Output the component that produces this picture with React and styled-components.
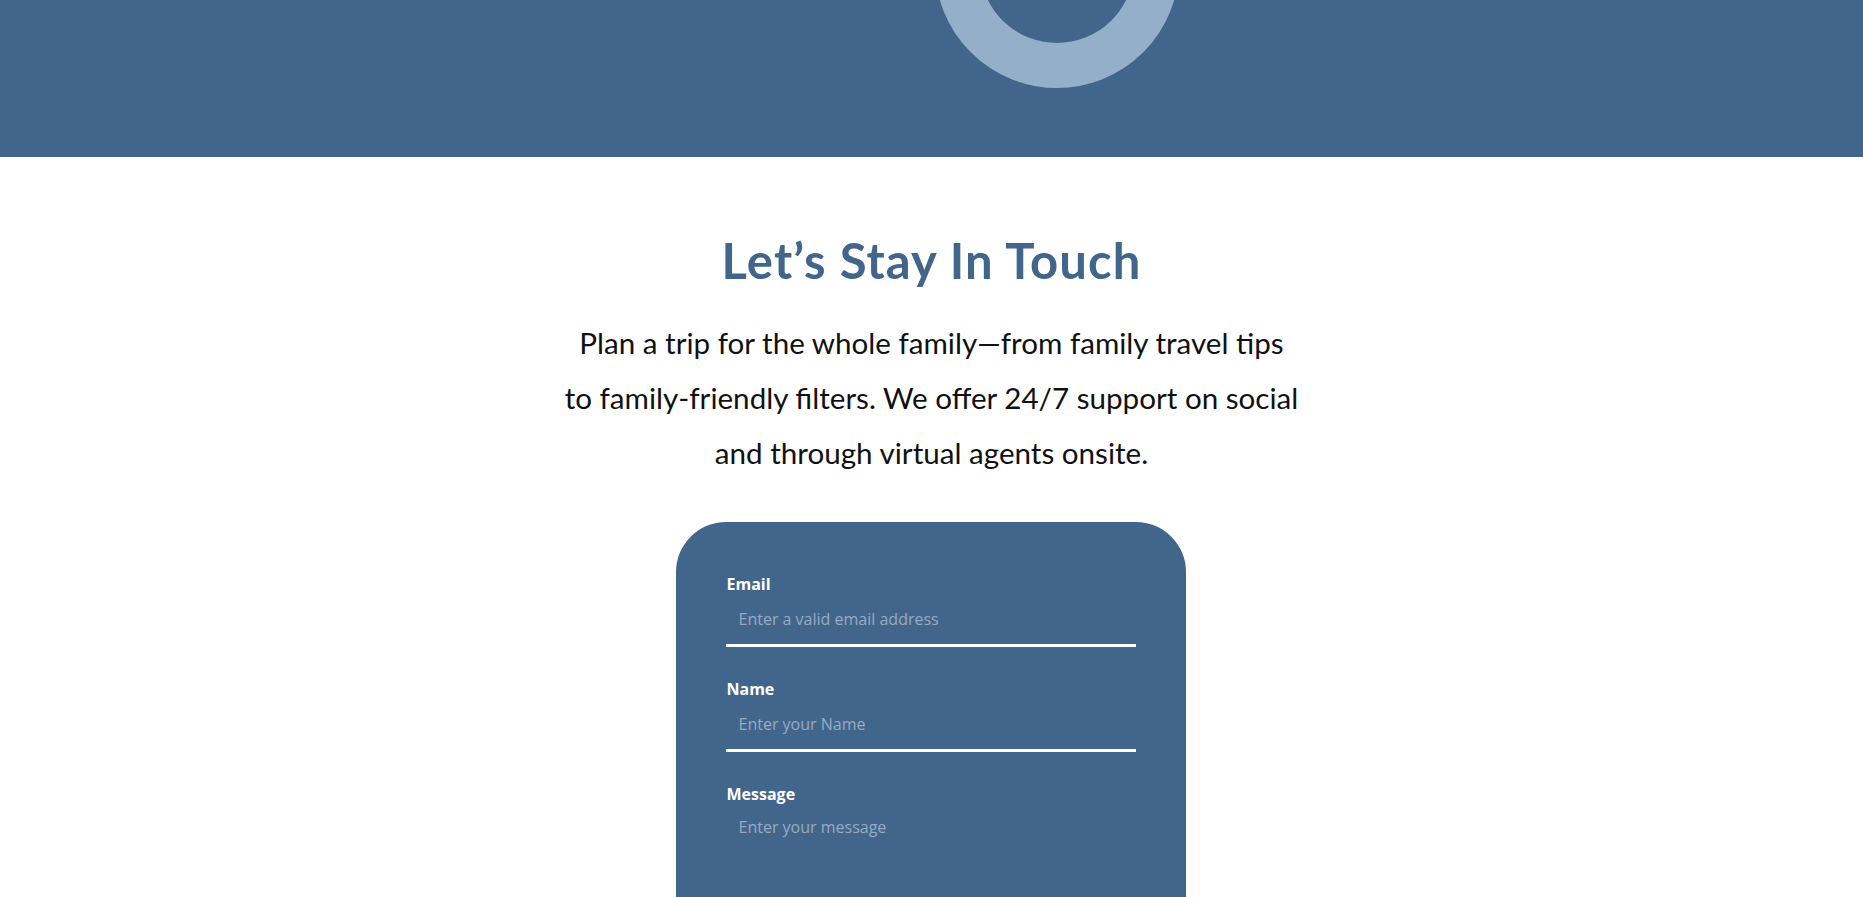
import styled, { createGlobalStyle } from "styled-components";

const GlobalStyle = createGlobalStyle`
    body {
        margin: 0;
        background: #ffffff;
        font-family: Lato, "Open Sans", sans-serif;
    }
`;

const Page = styled.div`
    display: flex;
    flex-direction: column;
    align-items: center;
`;

const Banner = styled.header`
    position: relative;
    width: 100%;
    height: 157px;
    background-color: #42668b;
    overflow: hidden;
`;

const Ring = styled.div`
    position: absolute;
    top: -156px;
    left: calc(50% + 3px);
    width: 244px;
    height: 244px;
    box-sizing: border-box;
    border: 45px solid #94afc9;
    border-radius: 50%;
`;

const Contact = styled.section`
    display: flex;
    flex-direction: column;
    align-items: center;
    padding: 74px 0 80px;
`;

const Title = styled.h2`
    margin: 0;
    font-family: Lato, sans-serif;
    font-weight: 700;
    font-size: 49px;
    line-height: 1.2;
    letter-spacing: 1.1px;
    color: #42668b;
`;

const Intro = styled.p`
    margin: 25px 0 42px;
    max-width: 800px;
    font-family: Lato, sans-serif;
    font-size: 29.6px;
    line-height: 55px;
    text-align: center;
    color: #111111;
`;

const Card = styled.form`
    width: 510px;
    box-sizing: border-box;
    padding: 51px 50px 50px;
    background-color: #42668b;
    border-radius: 50px;
    display: flex;
    flex-direction: column;
    gap: 31px;
`;

const Field = styled.label`
    display: flex;
    flex-direction: column;
    gap: 4px;
    font-family: "Open Sans", sans-serif;
`;

const Label = styled.span`
    font-size: 16px;
    line-height: 22px;
    font-weight: 700;
    color: #ffffff;
`;

const Input = styled.input`
    height: 48px;
    box-sizing: border-box;
    padding: 0 12px 4px;
    border: none;
    border-bottom: 3px solid #ffffff;
    background: transparent;
    font-family: "Open Sans", sans-serif;
    font-size: 16px;
    color: #ffffff;
    outline: none;
    &::placeholder {
        color: #97abc2;
    }
`;

const TextArea = styled.textarea`
    height: 130px;
    box-sizing: border-box;
    padding: 8px 12px;
    border: none;
    border-bottom: 3px solid #ffffff;
    background: transparent;
    font-family: "Open Sans", sans-serif;
    font-size: 16px;
    line-height: 20px;
    color: #ffffff;
    resize: none;
    outline: none;
    &::placeholder {
        color: #97abc2;
    }
`;

const Submit = styled.button`
    align-self: center;
    padding: 14px 48px;
    border: none;
    border-radius: 30px;
    background: #94afc9;
    color: #ffffff;
    font-family: "Open Sans", sans-serif;
    font-weight: 700;
    font-size: 16px;
`;

const App = () => (
    <Page>
        <GlobalStyle />
        <Banner>
            <Ring />
        </Banner>
        <Contact>
            <Title>Let’s Stay In Touch</Title>
            <Intro>
                Plan a trip for the whole family—from family travel tips<br />
                to family-friendly filters. We offer 24/7 support on social<br />
                and through virtual agents onsite.
            </Intro>
            <Card onSubmit={e => e.preventDefault()}>
                <Field>
                    <Label>Email</Label>
                    <Input type="email" placeholder="Enter a valid email address" />
                </Field>
                <Field>
                    <Label>Name</Label>
                    <Input type="text" placeholder="Enter your Name" />
                </Field>
                <Field>
                    <Label>Message</Label>
                    <TextArea placeholder="Enter your message" />
                </Field>
                <Submit type="submit">Submit</Submit>
            </Card>
        </Contact>
    </Page>
);

export default App;
